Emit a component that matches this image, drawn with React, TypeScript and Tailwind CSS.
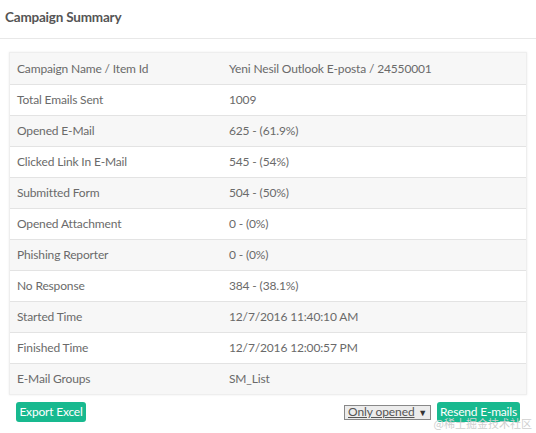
import React from "react";

const rows: [string, string][] = [
  ["Campaign Name / Item Id", "Yeni Nesil Outlook E-posta / 24550001"],
  ["Total Emails Sent", "1009"],
  ["Opened E-Mail", "625 - (61.9%)"],
  ["Clicked Link In E-Mail", "545 - (54%)"],
  ["Submitted Form", "504 - (50%)"],
  ["Opened Attachment", "0 - (0%)"],
  ["Phishing Reporter", "0 - (0%)"],
  ["No Response", "384 - (38.1%)"],
  ["Started Time", "12/7/2016 11:40:10 AM"],
  ["Finished Time", "12/7/2016 12:00:57 PM"],
  ["E-Mail Groups", "SM_List"],
];

export default function App() {
  return (
    <div
      className="w-[536px] h-[433px] bg-white text-[#6a6a6a] overflow-hidden relative"
      style={{ fontFamily: 'Lato, "Open Sans", sans-serif' }}
    >
      <div className="h-[39px] border-b border-[#e8e8e8] flex items-center pl-[5px] pb-[4px]">
        <span className="text-[13.5px] font-bold text-[#555] tracking-[-0.2px]">Campaign Summary</span>
      </div>
      <div className="pt-[13px] px-[9px]">
        <div className="border border-[#eeeeee] shadow-[0_0_2px_rgba(0,0,0,0.08)]">
          {rows.map(([k, v], i) => (
            <div
              key={k}
              className={`flex h-[31px] items-center text-[12px] tracking-[-0.15px] ${i % 2 === 0 ? "bg-[#f7f7f7]" : "bg-white"} ${i > 0 ? "border-t border-[#e3e3e3]" : ""}`}
            >
              <div className="w-[219px] pl-[7px]">{k}</div>
              <div>{v}</div>
            </div>
          ))}
        </div>
      </div>
      <div className="flex items-center justify-between px-[16px] pt-[7px]">
        <button className="h-[20px] w-[70px] bg-[#18b98f] text-white text-[12px] tracking-[-0.2px] rounded-[3px] leading-none">
          Export Excel
        </button>
        <div className="flex items-center gap-[6px]">
          <div className="h-[15px] w-[87px] border border-[#888] bg-[#ececec] text-[#555] text-[12px] tracking-[-0.1px] flex items-center justify-between pl-[3px] pr-[3px] leading-none">
            <span className="underline">Only opened</span>
            <span className="text-[9px] text-[#333]">▼</span>
          </div>
          <button className="h-[20px] w-[83px] bg-[#18b98f] text-white text-[12px] tracking-[-0.2px] rounded-[3px] leading-none">
            Resend E-mails
          </button>
        </div>
      </div>
      <div
        className="absolute right-[4px] top-[415px] text-[11px] text-[#cfcfcf]"
        style={{ fontFamily: '"Noto Sans CJK SC", sans-serif' }}
      >
        @稀土掘金技术社区
      </div>
    </div>
  );
}
